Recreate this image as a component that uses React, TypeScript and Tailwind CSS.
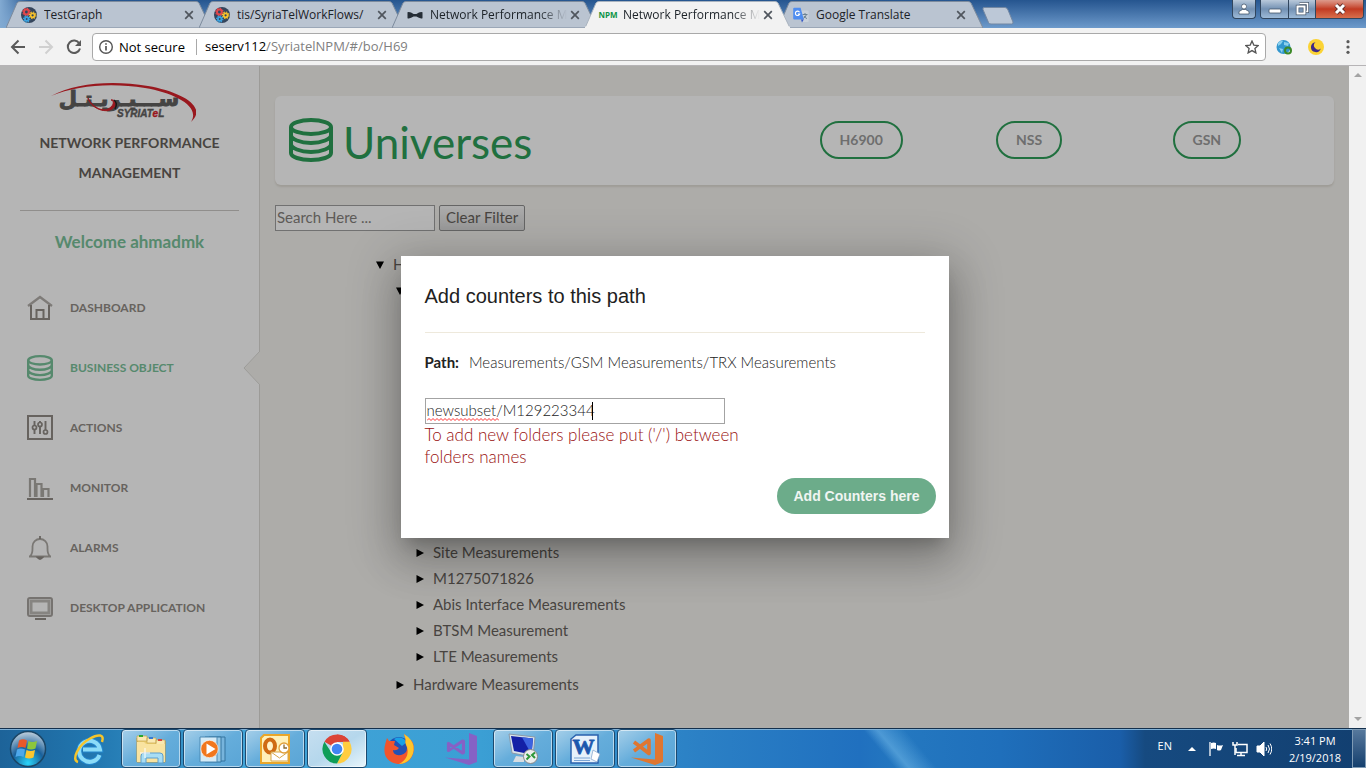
import React from "react";

const UI = "font-['Open_Sans','Noto_Sans',sans-serif]";
const APP = "font-['Lato','Open_Sans',sans-serif]";

function GearsIcon() {
  return (
    <svg viewBox="0 0 16 16" className="size-4">
      <circle cx="8" cy="8" r="8" fill="#35455c" />
      <circle cx="5.4" cy="5" r="2.4" fill="none" stroke="#e2474b" strokeWidth="2" />
      <circle cx="5.4" cy="5" r="3.7" fill="none" stroke="#e2474b" strokeWidth="1.2" strokeDasharray="1.4 1.5" />
      <circle cx="11.6" cy="8.3" r="2" fill="none" stroke="#f6c22d" strokeWidth="1.8" />
      <circle cx="11.6" cy="8.3" r="3.3" fill="none" stroke="#f6c22d" strokeWidth="1.2" strokeDasharray="1.3 1.3" />
      <circle cx="5.7" cy="12" r="1.8" fill="none" stroke="#3ba3e0" strokeWidth="1.8" />
      <circle cx="5.7" cy="12" r="3.1" fill="none" stroke="#3ba3e0" strokeWidth="1.2" strokeDasharray="1.2 1.2" />
    </svg>
  );
}

function BowIcon() {
  return (
    <svg viewBox="0 0 16 16" className="size-4">
      <path d="M.5 5.2Q3 4.3 6.6 7h2.8Q13 4.300 15.500 5.200V11.200Q13 12 9.400 9.600H6.600Q3 12 .5 11.200Z" fill="#252d36" />
    </svg>
  );
}

function TranslateIcon() {
  return (
    <svg viewBox="0 0 16 16" className="size-4">
      <path d="M6 3.500h8.600q1 0 1 1v9.500q0 1-1 1H9Z" fill="#c9d1da" />
      <path d="M9.500 7.500h5M12 6v1.500M13.500 7.500q-1 3-3.500 4M11 9q1 1.800 3 2.600" stroke="#6d8393" fill="none" />
      <path d="M1.200.8h6.400l3.200 11.700H1.200q-1 0-1-1V1.800q0-1 1-1Z" fill="#4f8df0" />
      <path d="M8 12.500h2.800L9 15.400Z" fill="#3456c4" />
      <path d="M6.500 5.200A2.200 2.200 0 1 0 6.700 7H4.800" stroke="#fff" fill="none" strokeWidth="1.100" />
    </svg>
  );
}

function NpmIcon() {
  return (
    <svg viewBox="0 0 16 16" className="size-4 overflow-visible">
      <text x="8" y="11" textAnchor="middle" fontSize="8" fontWeight="700" fontFamily="Liberation Sans Narrow, Open Sans, sans-serif" fill="#0d9447">NPM</text>
    </svg>
  );
}

function Tab({ icon, title, active, fade }: { icon: React.ReactNode; title: string; active?: boolean; fade?: boolean }) {
  return (
    <div className={`relative -mr-3 h-7 w-[205px] min-w-0 shrink ${active ? "z-10" : ""}`}>
      <svg viewBox="0 0 205 28" preserveAspectRatio="none" className="absolute inset-0 h-full w-full">
        <path d="M0 28L11 3Q12 1.500 14 1.500H190Q192 1.500 193 3L205 28Z" fill={active ? "#f2f2f2" : "#bac4d1"} stroke={active ? "#a9b3bf" : "#7d8b9d"} />
        {active && <path d="M0 27.500H205" stroke="#f2f2f2" strokeWidth="2" />}
      </svg>
      <div className="relative flex h-7 items-center pt-px pr-3.5 pl-[15px]">
        {icon}
        <span className={`ml-[7px] min-w-0 flex-1 overflow-hidden whitespace-nowrap text-xs text-[#1c2228] ${fade ? "[mask-image:linear-gradient(to_left,transparent,black_28px)]" : ""}`}>
          {title}
        </span>
        <button aria-label="Close tab" className="flex size-4 shrink-0 items-center justify-center">
          <svg viewBox="0 0 10 10" className="size-[10px]"><path d="M1.200 1.200l7.600 7.600M8.800 1.200L1.200 8.800" stroke="#50565e" strokeWidth="1.700" /></svg>
        </button>
      </div>
    </div>
  );
}

const glass = "flex h-full items-center justify-center border-r border-[#31465e] bg-linear-to-b from-[#b9c9da] via-[#7391b3] to-[#9dbad8]";

function TitleBar() {
  return (
    <header className="flex h-7 shrink-0 justify-between overflow-hidden bg-linear-to-b from-[#25558f] to-[#6d9acb]">
      <div className="flex min-w-0 flex-1 bg-linear-to-r from-[#82aad2] to-transparent to-[30px] pl-1.5">
        <Tab icon={<GearsIcon />} title="TestGraph" />
        <Tab icon={<GearsIcon />} title="tis/SyriaTelWorkFlows/" />
        <Tab icon={<BowIcon />} title="Network Performance Ma" fade />
        <Tab icon={<NpmIcon />} title="Network Performance Ma" active fade />
        <Tab icon={<TranslateIcon />} title="Google Translate" />
        <button aria-label="New tab" className="ml-2.5 pt-1">
          <svg viewBox="0 0 34 20" className="h-5 w-[34px]"><path d="M3 1.500H24Q26 1.500 27 4L32 16Q32.500 18 30.500 18H10Q8 18 7.500 16.500L2 3.500Q1.500 1.500 3 1.500Z" fill="#bcc8d7" stroke="#7388a3" /></svg>
        </button>
      </div>
      <div className="flex h-[19px] shrink-0 gap-1 pr-0.5">
        <button aria-label="Profile" className={`${glass} w-6 rounded-b border border-t-0`}>
          <svg viewBox="0 0 12 12" className="size-3"><circle cx="6" cy="3.500" r="2.500" fill="#fff" stroke="#384a60" strokeWidth=".7" /><path d="M1 11V8.500L4.500 6.500h3L11 8.500V11Z" fill="#fff" stroke="#384a60" strokeWidth=".7" /></svg>
        </button>
        <div className="flex overflow-hidden rounded-b border border-t-0 border-[#31465e]">
          <button aria-label="Minimize" className={`${glass} w-7`}>
            <svg viewBox="0 0 14 12" className="h-3 w-3.5"><rect x="1" y="6" width="12" height="4" rx="1" fill="#fff" stroke="#45566b" strokeWidth=".8" /></svg>
          </button>
          <button aria-label="Restore" className={`${glass} w-[27px]`}>
            <svg viewBox="0 0 14 14" className="size-3.5" fill="none"><path d="M4.500 1.500h8v8h-2" stroke="#45566b" strokeWidth="3" /><path d="M4.500 1.500h8v8h-2" stroke="#fff" strokeWidth="1.600" /><rect x="2.500" y="4.500" width="7" height="7" stroke="#45566b" strokeWidth="3.400" /><rect x="2.500" y="4.500" width="7" height="7" stroke="#fff" strokeWidth="2" /></svg>
          </button>
          <button aria-label="Close" className="flex h-full w-[47px] items-center justify-center bg-linear-to-b from-[#dc9a8c] via-[#c23a22] to-[#d86f4c]">
            <svg viewBox="0 0 14 12" className="h-3 w-3.5"><path d="M3 2l8 8M11 2l-8 8" stroke="#5b2a28" strokeWidth="4.600" /><path d="M3 2l8 8M11 2l-8 8" stroke="#fff" strokeWidth="3" /></svg>
          </button>
        </div>
      </div>
    </header>
  );
}

function Toolbar() {
  return (
    <nav className="flex h-[38px] shrink-0 items-center border-b border-[#b6b4b6] bg-[#f2f2f2] pl-2.5">
      <button aria-label="Back" className="size-4"><svg viewBox="0 0 16 16" fill="none" stroke="#5a5a5a" strokeWidth="2"><path d="M15 8H2.500M8.500 1.500L2 8l6.500 6.500" /></svg></button>
      <button aria-label="Forward" className="ml-3 size-4"><svg viewBox="0 0 16 16" fill="none" stroke="#d0d0d0" strokeWidth="2"><path d="M1 8h12.500M7.500 1.500L14 8l-6.500 6.500" /></svg></button>
      <button aria-label="Reload" className="ml-3 size-4"><svg viewBox="0 0 16 16" fill="none" stroke="#5a5a5a" strokeWidth="2"><path d="M13.300 4.500A6.200 6.200 0 1 0 14 9.500" /><path d="M15 1v6H9Z" fill="#5a5a5a" stroke="none" /></svg></button>
      <div className="ml-2.5 flex h-7 flex-1 items-center rounded-sm border border-[#a9a9a9] bg-white pr-1.5 pl-[5px] text-[13px]">
        <svg viewBox="0 0 16 16" className="size-4" fill="none" stroke="#555" strokeWidth="1.400"><circle cx="8" cy="8" r="6.300" /><path d="M8 7v4.500M8 4.300v1.500" strokeWidth="1.700" /></svg>
        <span className="ml-[5px] w-[78px] whitespace-nowrap border-r border-[#a9a9a9] leading-4 text-black">Not secure</span>
        <span className="ml-2"><span className="text-black">seserv112</span><span className="text-[#808080]">/SyriatelNPM/#/bo/H69</span></span>
        <button aria-label="Bookmark" className="ml-auto size-3.5"><svg viewBox="0 0 14 14"><path d="M7 1l1.800 4.100 4.400.4-3.300 3 1 4.400L7 10.600l-3.900 2.300 1-4.400-3.300-3 4.400-.4Z" fill="none" stroke="#555" strokeWidth="1.300" /></svg></button>
      </div>
      <button aria-label="Web extension" className="ml-2.5 size-4">
        <svg viewBox="0 0 16 16"><circle cx="7.500" cy="8" r="7" fill="#3297cf" /><path d="M2 4q3-3 5-2l-2 3-3 2ZM8 3l5 1-1 3-4-1ZM3 9l4 1-1 4Z" fill="#8bd0ee" /><circle cx="12" cy="11.500" r="3" fill="none" stroke="#3c8927" strokeWidth="2" /></svg>
      </button>
      <button aria-label="Night mode" className="ml-4 size-4">
        <svg viewBox="0 0 16 16"><circle cx="8" cy="8" r="8" fill="#fbd334" /><path d="M7.500 3.200A5 5 0 1 0 12.800 9.500 4 4 0 0 1 7.500 3.200Z" fill="#3f2a86" /></svg>
      </button>
      <button aria-label="Menu" className="mr-2.5 ml-4 size-4"><svg viewBox="0 0 16 16" fill="#5a5a5a"><circle cx="8" cy="2.700" r="1.600" /><circle cx="8" cy="8" r="1.600" /><circle cx="8" cy="13.300" r="1.600" /></svg></button>
    </nav>
  );
}

function Logo() {
  return (
    <svg viewBox="0 0 146 42" className="h-[42px] w-[146px]" role="img" aria-label="Syriatel">
      <text x="69" y="24" textAnchor="middle" direction="rtl" fontFamily="DejaVu Sans, sans-serif" fontWeight="700" fontSize="21" fill="#62615f" stroke="#62615f" strokeWidth="1">ســـيـريـتـل</text>
      <text x="67" y="35" fontFamily="Liberation Sans, sans-serif" fontWeight="700" fontStyle="italic" fontSize="10" fill="#62615f" stroke="#62615f" strokeWidth=".4">SYRIAT<tspan fill="#d8222b" stroke="#d8222b">e</tspan>L</text>
      <path d="M1 14C25 1 62-2 98 4C132 10 158 25 141 40C151 24 124 11 95 6C62 .5 27 3 1 14Z" fill="#d8222b" />
      <path d="M38 16C42 25 54 32 61 25C65 21 63 18 61 18C66 17 67 24 62 27C54 32 40 25 38 16Z" fill="#d8222b" stroke="#d8222b" />
      <path d="M64 18q4 3 1 9" fill="none" stroke="#222" strokeWidth="1.500" />
    </svg>
  );
}

function Database({ className }: { className: string }) {
  return (
    <svg viewBox="0 0 44 44" className={className} fill="none" stroke="currentColor" strokeWidth="4">
      <ellipse cx="22" cy="9" rx="20" ry="7" />
      <path d="M2 9v26c0 4 9 7 20 7s20-3 20-7V9M2 17c0 4 9 8 20 8s20-4 20-8M2 26c0 4 9 8 20 8s20-4 20-8" />
    </svg>
  );
}

const iconCls = "size-[26px]";
const items = [
  {
    label: "DASHBOARD",
    icon: <svg viewBox="0 0 26 26" className={iconCls} fill="none" stroke="currentColor" strokeWidth="2"><path d="M1 11L13 2l12 9" opacity=".7" strokeWidth="2.300" /><path d="M4 10v14h18V10M9.500 24v-9h7v9" /></svg>,
  },
  { label: "BUSINESS OBJECT", icon: <Database className={iconCls} />, active: true },
  {
    label: "ACTIONS",
    icon: <svg viewBox="0 0 26 26" className={iconCls} fill="none" stroke="currentColor" strokeWidth="2"><rect x="1" y="1" width="24" height="23" /><path d="M7.500 6v4M7.500 15v4M13 6v1M13 12v7M18.500 6v9" strokeWidth="1.900" /><circle cx="7.500" cy="12.500" r="2" strokeWidth="1.700" /><circle cx="13" cy="9.500" r="2" strokeWidth="1.700" /><circle cx="18.500" cy="17" r="2" strokeWidth="1.700" /></svg>,
  },
  {
    label: "MONITOR",
    icon: <svg viewBox="0 0 26 26" className={iconCls} fill="none" stroke="currentColor"><path d="M0 24h26" strokeWidth="2" /><path d="M3 22V4h5v18M9.500 22V9h5v13M16 22v-8h5.500v8" opacity=".75" strokeWidth="2.200" /></svg>,
  },
  {
    label: "ALARMS",
    icon: <svg viewBox="0 0 26 26" className={iconCls} fill="none" stroke="currentColor" strokeWidth="1.800"><path d="M2 21.500h22M3 21.500c3-3 2.500-6 2.500-10a7.500 7.500 0 0 1 15 0c0 4-.5 7 2.500 10" opacity=".75" /><path d="M13 1v3M10.500 22.500q2.500 3 5 0Z" fill="currentColor" /></svg>,
  },
  {
    label: "DESKTOP APPLICATION",
    icon: <svg viewBox="0 0 26 26" className={iconCls} fill="none" stroke="currentColor"><rect x="1" y="3" width="24" height="18" rx="2" strokeWidth="2" opacity=".8" /><rect x="4" y="6" width="18" height="12" strokeWidth="3" opacity=".6" /><path d="M8 24h11" strokeWidth="2" /></svg>,
  },
];

function Sidebar() {
  return (
    <aside className="relative w-[260px] shrink-0 border-r border-[#dcdbd7] bg-white px-5 pt-4">
      <div className="flex flex-col items-center pr-3.5">
        <Logo />
      </div>
      <h1 className="mt-1 px-4 pb-[22px] text-center text-sm leading-[30px] font-bold text-[#66615b]">NETWORK PERFORMANCE MANAGEMENT</h1>
      <div className="border-t border-[#cbc9c5]" />
      <p className="pt-[19px] pb-[21px] text-center text-[17px] leading-6 font-bold text-[#7ac29a]">Welcome ahmadmk</p>
      <ul className="mt-[3px]">
        {items.map((it) => (
          <li key={it.label} className="relative">
            <a href="#" className={`flex h-[60px] items-center gap-[17px] pl-[7px] text-xs font-bold ${it.active ? "text-[#7ac29a]" : "text-[#918c86]"}`}>
              {it.icon}
              <span>{it.label}</span>
            </a>
            {it.active && (
              <svg viewBox="0 0 17 34" className="absolute top-[13px] -right-[21px] h-[34px] w-[17px]"><path d="M17 0L1 17l16 17" fill="#f4f3ef" stroke="#dcdbd7" /></svg>
            )}
          </li>
        ))}
      </ul>
    </aside>
  );
}

function TreeRow({ label, open }: { label?: string; open?: boolean }) {
  return (
    <div className="flex h-[26px] items-center gap-[9px]">
      <button aria-label="Toggle folder" className="size-2">
        <svg viewBox="0 0 8 8">{open ? <path d="M0 .5h8L4 8Z" /> : <path d="M.5 0L8 4 .5 8Z" />}</svg>
      </button>
      {label && <span className="whitespace-nowrap pb-0.5 text-[15px]">{label}</span>}
    </div>
  );
}

const leaves = ["Site Measurements", "M1275071826", "Abis Interface Measurements", "BTSM Measurement", "LTE Measurements"];

function Main() {
  return (
    <main className="min-w-0 flex-1 overflow-hidden bg-[#f4f3ef] px-[15px] pt-[30px] text-[#66615b]">
      <section className="grid h-[89px] grid-cols-6 items-center rounded-md bg-white pb-0.5 shadow-[0_2px_2px_rgba(204,197,185,0.5)]">
        <h2 className="col-span-3 flex items-center gap-2.5 pl-3.5 text-[44px] leading-none text-[#2e9e59]">
          <Database className="size-11" />
          <span className="pt-1">Universes</span>
        </h2>
        {["H6900", "NSS", "GSN"].map((n) => (
          <div key={n} className="px-[15px]">
            <button className="h-[38px] rounded-[20px] border-2 border-[#2e9e59] px-[18px] text-sm font-bold text-[#9b9b9b]">{n}</button>
          </div>
        ))}
      </section>
      <div className="mt-5 flex gap-1">
        <input aria-label="Search" placeholder="Search Here ..." className="h-[26px] w-40 border border-[#a0a0a0] bg-white px-px pb-0.5 text-[15px] placeholder:text-[#85817c]" />
        <button className="h-[26px] rounded-xs border border-[#8f8f8f] bg-linear-to-b from-[#f4f4f4] to-[#d8d8d8] px-1.5 pb-0.5 text-[15px]">Clear Filter</button>
      </div>
      <ul className="mt-[21px] ml-[101px]">
        <li>
          <TreeRow label="H" open />
          <ul className="ml-5">
            <li>
              <TreeRow open />
              <ul className="mt-[236px] mb-0.5 ml-5">
                {leaves.map((l) => <li key={l}><TreeRow label={l} /></li>)}
              </ul>
            </li>
            <li><TreeRow label="Hardware Measurements" /></li>
          </ul>
        </li>
      </ul>
    </main>
  );
}

function Dialog() {
  return (
    <div className="absolute inset-0 flex items-center justify-center bg-black/29">
      <div role="dialog" aria-labelledby="dlg-title" className="w-[548px] bg-white px-6 pt-6 pb-6 shadow-[0_11px_15px_-7px_rgba(0,0,0,0.2),0_24px_38px_3px_rgba(0,0,0,0.14),0_9px_46px_8px_rgba(0,0,0,0.2)]">
        <h3 id="dlg-title" className="font-['Liberation_Sans',sans-serif] text-xl leading-8 text-[#212121]">Add counters to this path</h3>
        <div className="mt-5 border-t border-[#eee9dc]" />
        <p className="mt-[19px] mb-[26px] flex gap-2.5 text-[15px] leading-5 font-light text-[#222]">
          <b className="font-bold">Path:</b>
          <span>Measurements/GSM Measurements/TRX Measurements</span>
        </p>
        <div className="relative w-[300px]">
          <input id="folder-path" aria-label="Folder path" defaultValue="newsubset/M129223344" className="block h-[26px] w-full border border-[#a3a3a3] bg-white px-px pb-0.5 text-[15px] font-light text-[#222] outline-none" />
          <svg viewBox="0 0 72 3" className="absolute top-5 left-0.5 h-[3px] w-[72px]"><path d={"M0 2.500" + "l2-2l2 2".repeat(18)} fill="none" stroke="#f33" /></svg>
          <span className="absolute top-1 left-[167px] h-[18px] w-px bg-black" />
        </div>
        <label htmlFor="folder-path" className="block w-[330px] text-[17px] leading-[22px] font-light text-[#990f0f]">To add new folders please put ('/') between folders names</label>
        <div className="-mr-[11px] mt-2.5 flex justify-end">
          <button className="h-9 rounded-full bg-[#6cac8a] px-4 font-['Liberation_Sans',sans-serif] text-sm font-bold text-[#f0f5f2]">Add Counters here</button>
        </div>
      </div>
    </div>
  );
}

function ScrollBar() {
  return (
    <div className="flex w-[17px] shrink-0 flex-col items-center justify-between bg-[#f1f1f1] py-[7px]">
      <svg viewBox="0 0 8 4" className="h-1 w-2"><path d="M0 4L4 0l4 4Z" fill="#a3a3a3" /></svg>
      <svg viewBox="0 0 8 4" className="h-1 w-2"><path d="M0 0h8L4 4Z" fill="#a3a3a3" /></svg>
    </div>
  );
}

const big = "size-8";
const tasks = [
  {
    name: "Internet Explorer",
    icon: (
      <svg viewBox="0 0 32 32" className={big} fill="none">
        <path d="M26.500 22A10.500 10.500 0 1 1 27 16.500H10" stroke="#2286cd" strokeWidth="6" />
        <path d="M26.500 22A10.500 10.500 0 1 1 27 16.500H10" stroke="#8bdcf8" strokeWidth="4" />
        <path d="M5 29C-2 27 5 12 17 5.500C25 1 32 1 29 9" stroke="#f6c52a" strokeWidth="2.500" />
      </svg>
    ),
  },
  {
    name: "Windows Explorer",
    boxed: true,
    icon: (
      <svg viewBox="0 0 32 32" className={big}>
        <path d="M2 5h9l2 3h17v21H2Z" fill="#edcf74" stroke="#b99743" />
        <path d="M2 3h10v5H2ZM12 5h9v5h-9ZM21 7h9v5h-9Z" fill="#fae9b2" stroke="#c6a64d" strokeWidth=".7" />
        <path d="M4 2h4v2H4Z" fill="#2ba72d" /><path d="M14 4h4v2h-4Z" fill="#3679d4" /><path d="M23 6h4v2h-4Z" fill="#d6453c" />
        <path d="M2 9h7l2 2h19v18H2Z" fill="#f9e3a0" />
        <path d="M6 30V23q0-3 3-3h16q3 0 3 3v7h-5v-5H11v5Z" fill="#a8ddf4" stroke="#5d9fcf" />
        <path d="M10 15v10M5 20h10" stroke="#fff" />
      </svg>
    ),
  },
  {
    name: "Media Player",
    boxed: true,
    icon: (
      <svg viewBox="0 0 32 32" className={big}>
        <path d="M12 4h16v24H12Z" fill="#77b4dc" stroke="#34759f" /><path d="M8 4h16v25H8Z" fill="#9acbe7" stroke="#34759f" /><path d="M3 4h17v25H3Z" fill="#d5ebf7" stroke="#4c8ab4" />
        <circle cx="12.500" cy="16" r="8.700" fill="#f1771e" stroke="#fff" strokeWidth=".6" /><path d="M9.500 10.500v11l9-5.500Z" fill="#fff" />
      </svg>
    ),
  },
  {
    name: "Outlook",
    boxed: true,
    icon: (
      <svg viewBox="0 0 32 32" className={big}>
        <path d="M5 2h25v28H2V5Z" fill="#fff0b8" stroke="#eaa62a" strokeWidth="2" />
        <ellipse cx="11" cy="13" rx="5" ry="6.500" fill="#fff2c8" stroke="#cf6a13" strokeWidth="4" />
        <path d="M12 19h17v9H12Z" fill="#fff" stroke="#d7a64a" /><path d="M12 19l8.500 6 8.500-6" fill="none" stroke="#d7a64a" />
        <circle cx="25" cy="15" r="5" fill="#fff" stroke="#e0a03d" strokeWidth="1.300" /><path d="M25 11.500V15h3" fill="none" stroke="#8a6a32" strokeWidth="1.300" />
      </svg>
    ),
  },
  {
    name: "Chrome",
    boxed: true,
    bright: true,
    icon: (
      <svg viewBox="0 0 32 32" className={big}>
        <path d="M16 16L3.440 8.750A14.500 14.500 0 0 1 28.560 8.750L16 9Z" fill="#db4437" />
        <path d="M16 1.500A14.500 14.500 0 0 1 28.560 8.750H16Z" fill="#db4437" />
        <path d="M28.560 8.750A14.500 14.500 0 0 1 16 30.500L22 19V8.750Z" fill="#ffcd40" />
        <path d="M3.440 8.750A14.500 14.500 0 0 0 16 30.500L22 19 10 19Z" fill="#0f9d58" />
        <circle cx="16" cy="16" r="6.800" fill="#fff" /><circle cx="16" cy="16" r="5.300" fill="#4285f4" />
      </svg>
    ),
  },
  {
    name: "Firefox",
    icon: (
      <svg viewBox="0 0 32 32" className={big}>
        <circle cx="16" cy="16" r="12" fill="#2451b3" />
        <path d="M11 6q7-4 13 3l-5 4Z" fill="#18a0e6" />
        <path d="M4 5L2.500 10C-2 25 8 31 17 31C28 30 33 20 30 10L28 7L27 9Q25 3 21 1Q23 6 22.500 9Q27 20 18 22Q10 23 10 17Q14 18 16 15L11 12L12 8L6 8Z" fill="#f2552c" />
        <path d="M21 1Q29 6 30.500 13C32 24 24 31 16 31Q27 25 24 14Q22 10 22.500 9Q23 6 21 1Z" fill="#ffc52b" />
      </svg>
    ),
  },
  {
    name: "Visual Studio",
    icon: (
      <svg viewBox="0 0 32 32" className={big}>
        <path d="M24 0l8 3v26l-8 3L0 24.500l24 2Z" fill="#8661c5" />
        <path d="M3.500 10.500v7l14-9.500 1 .5v11l-1 .5Z" fill="none" stroke="#8661c5" strokeWidth="3.200" strokeLinejoin="round" />
      </svg>
    ),
  },
  {
    name: "Remote Desktop",
    boxed: true,
    icon: (
      <svg viewBox="0 0 32 32" className={big}>
        <path d="M2 1l26 3-2 20L5 20Z" fill="#d7e2eb" stroke="#8a99a8" /><path d="M4 3l22 2.500-1.500 16L7 18Z" fill="#1320a6" /><path d="M15 4.300l11 1.200-1.500 16Z" fill="#3c64e0" />
        <path d="M9 23l8 1v5H6Z" fill="#d7dde2" /><circle cx="23.500" cy="23.500" r="7" fill="#eceeee" stroke="#888" /><path d="M19.500 21l3 2.500-3 3M28 19.500l-3 2.500 3 3" fill="none" stroke="#2c9638" strokeWidth="2" />
      </svg>
    ),
  },
  {
    name: "Word",
    boxed: true,
    icon: (
      <svg viewBox="0 0 32 32" className={big}>
        <path d="M7 2h22v28H2V6Z" fill="#e6f1fb" stroke="#2a62ae" strokeWidth="1.500" />
        <text x="14.500" y="21" textAnchor="middle" fontFamily="Liberation Serif, serif" fontWeight="700" fontSize="22" fill="#1c57ad" stroke="#1c57ad" strokeWidth=".8">W</text>
        <path d="M24 17l7 4-3 8-6-3Z" fill="#fff" stroke="#7b9fc8" strokeWidth=".7" /><path d="M5 25h16M5 27.500h16" stroke="#7ba5d5" />
      </svg>
    ),
  },
  {
    name: "Visual Studio Code",
    boxed: true,
    icon: (
      <svg viewBox="0 0 32 32" className={big}>
        <path d="M24 0l8 3v26l-8 3L0 24.500l24 2Z" fill="#df7630" />
        <path d="M3 9L18 20.500V7L3 18" fill="none" stroke="#df7630" strokeWidth="3.600" strokeLinejoin="round" />
      </svg>
    ),
  },
];

function TaskBar() {
  return (
    <footer className="flex h-10 shrink-0 items-stretch border-t border-[#14304d] bg-[linear-gradient(50deg,transparent_64%,rgba(120,190,235,0.5)_65%,transparent_67%),linear-gradient(90deg,#1d6399_0,#2176af_90px,#41a4d8_240px,#3b9fd4_480px,#2b80c5_700px,#2070bf_860px,#2478c0_900px,#1f6fbb_1000px,#1a5ea9_1120px,#164a80_1145px,#123f70_1366px)] text-white shadow-[inset_0_1px_0_#7fb0d6]">
      <button aria-label="Start" className="flex w-[55px] items-center justify-center">
        <svg viewBox="0 0 38 38" className="size-[38px]">
          <defs><radialGradient id="orb" cx=".5" cy=".9" r=".9"><stop offset="0" stopColor="#29d5fa" /><stop offset=".5" stopColor="#19609b" /><stop offset="1" stopColor="#c4d2de" /></radialGradient></defs>
          <circle cx="19" cy="19" r="17.500" fill="url(#orb)" stroke="#1b4666" strokeWidth="1.500" />
          <path d="M10 10.500q4-2.500 8 0l-1.500 7.500q-4-2-8 0Z" fill="#e8582a" /><path d="M19.500 11q4 2 8.500 0l-1.500 7.500q-4.500 2-8.500 0Z" fill="#8cc63c" />
          <path d="M8 19.500q4-2 8 0L14.500 27q-4-2-8 0Z" fill="#4fa8ea" /><path d="M17.500 20q4 2 8.500 0L24.500 27.500q-4.500 2-8.500 0Z" fill="#fcc62f" />
        </svg>
      </button>
      <div className="flex flex-1 gap-0.5 pl-1">
        {tasks.map((t) => (
          <button
            key={t.name}
            aria-label={t.name}
            className={`flex w-[60px] items-center justify-center ${
              t.boxed ? `rounded-sm border border-[#1c4a70] shadow-[inset_0_0_0_1px_rgba(255,255,255,0.55)] bg-linear-to-br ${t.bright ? "from-[#c6dff0] via-[#b5d7ec] to-[#e8f6fc]" : "from-[#a5cfe9] via-[#65addb] to-[#5aa5d6]"}` : ""
            }`}
          >
            {t.icon}
          </button>
        ))}
      </div>
      <div className="flex items-center gap-2 text-xs">
        <span className="mr-2 pb-1 text-[11px]">EN</span>
        <svg viewBox="0 0 8 4" className="mr-1 h-1 w-2"><path d="M0 4L4 0l4 4Z" fill="#fff" /></svg>
        <svg viewBox="0 0 16 16" className="size-4"><path d="M2 1v14" stroke="#fff" strokeWidth="1.300" /><path d="M3 2q3-1 5 0v6q-2-1-5 0Z" fill="#fff" /><path d="M9 4q3 1 6 0l-2 5q-2 1-4 0Z" fill="#fff" /></svg>
        <svg viewBox="0 0 16 16" className="size-4" fill="none" stroke="#fff" strokeWidth="1.500"><path d="M6 3.500h9v8H4V7M5 14.500h8M9 12v2" /><path d="M1 1v3h4V1M3 4v10" /></svg>
        <svg viewBox="0 0 16 16" className="size-4" fill="none" stroke="#fff"><path d="M1 5h3l4-4v14l-4-4H1Z" fill="#fff" /><path d="M10 6q1.500 2 0 4M12 4q3 4 0 8M14 2.500q3.500 5.500 0 11" /></svg>
        <div className="w-[70px] text-center text-[11px] leading-[17px]">
          <div>3:41 PM</div>
          <div>2/19/2018</div>
        </div>
      </div>
      <button aria-label="Show desktop" className="ml-0.5 w-3.5 border border-[#7f9bb5] bg-linear-to-b from-[#56789c] to-[#14406e]" />
    </footer>
  );
}

export default function App() {
  return (
    <div className={`flex h-screen min-h-[600px] flex-col overflow-hidden ${UI}`}>
      <TitleBar />
      <Toolbar />
      <div className={`flex min-h-0 flex-1 ${APP}`}>
        <div className="relative flex min-w-0 flex-1 overflow-hidden">
          <Sidebar />
          <Main />
          <Dialog />
        </div>
        <ScrollBar />
      </div>
      <TaskBar />
    </div>
  );
}
